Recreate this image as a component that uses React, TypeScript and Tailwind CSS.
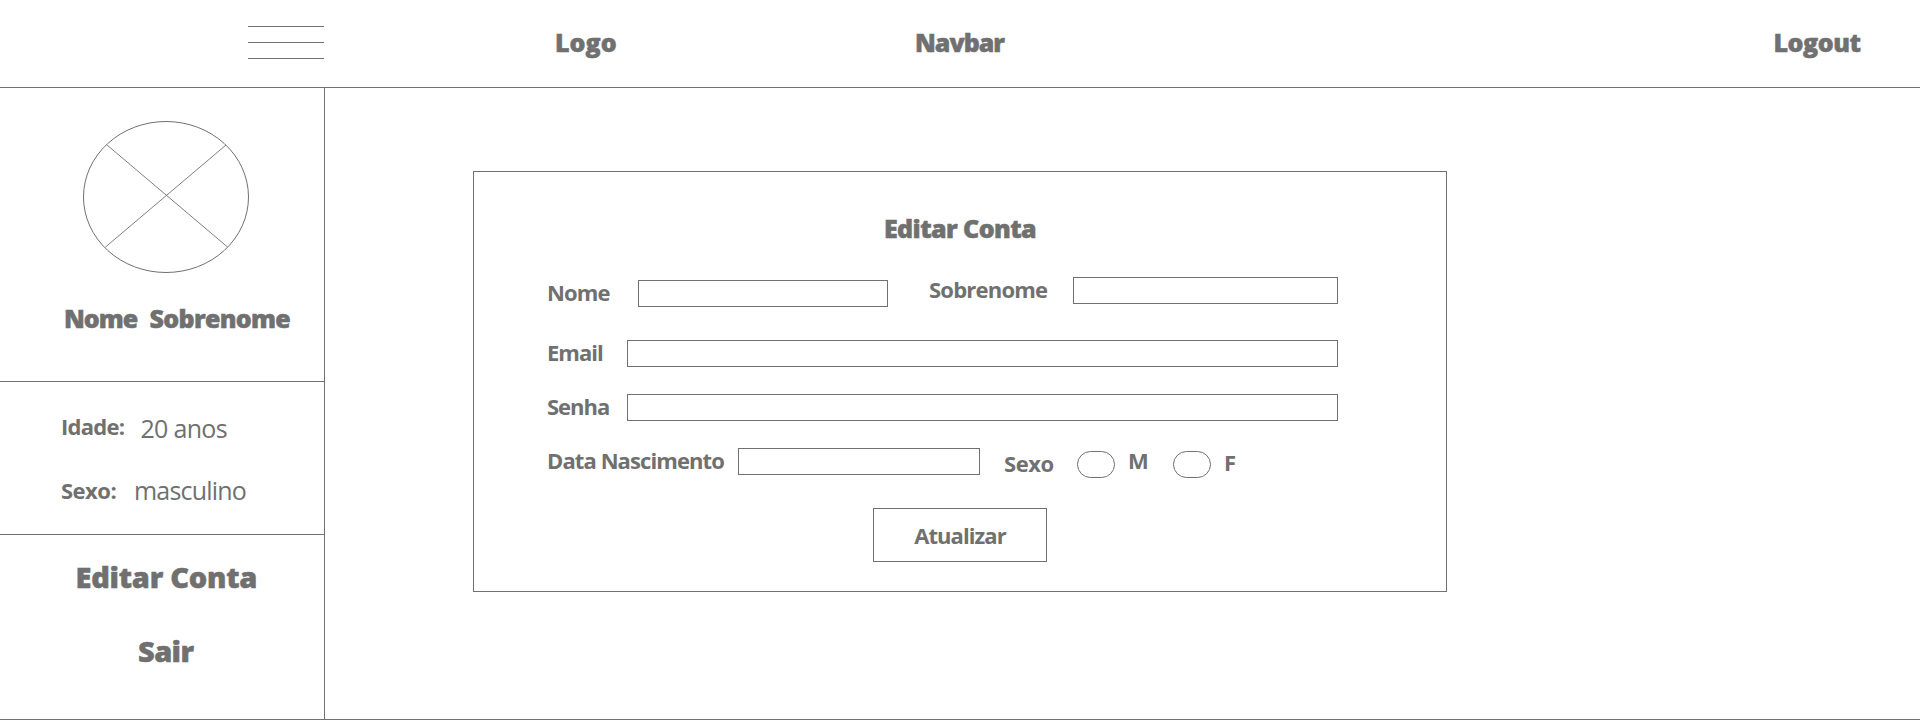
import type { ReactNode } from "react";

function Heading({ className, children }: { className: string; children: ReactNode }) {
  return (
    <span
      className={`block shrink-0 whitespace-nowrap text-[25px] leading-8 font-extrabold [-webkit-text-stroke:0.5px_#707070] ${className}`}
    >
      {children}
    </span>
  );
}

function Label({ className, children }: { className: string; children: ReactNode }) {
  return (
    <span className={`block shrink-0 whitespace-nowrap text-[22px] leading-7 font-bold ${className}`}>
      {children}
    </span>
  );
}

function Value({ className, children }: { className: string; children: ReactNode }) {
  return (
    <span className={`block whitespace-nowrap text-[25px] leading-8 font-normal ${className}`}>{children}</span>
  );
}

function Field({ className }: { className: string }) {
  return <input className={`block h-[27px] shrink-0 border border-[#707070] bg-white outline-none ${className}`} />;
}

function Header() {
  return (
    <header className="flex h-[88px] shrink-0 items-start border-b border-[#707070] pt-[26px]">
      <div className="ml-[248px] flex w-[76px] flex-col gap-[15px]">
        <div className="h-px bg-[#707070]" />
        <div className="h-px bg-[#707070]" />
        <div className="h-px bg-[#707070]" />
      </div>
      <Heading className="ml-[231px] w-[360px]">Logo</Heading>
      <Heading className="w-[858.5px] tracking-[-1px]">Navbar</Heading>
      <Heading className="tracking-[-0.45px]">Logout</Heading>
    </header>
  );
}

function Sidebar() {
  return (
    <aside className="flex w-[325px] shrink-0 flex-col border-r border-[#707070]">
      <section className="h-[294px] border-b border-[#707070] pt-[33px]">
        <svg className="ml-[83px] block" width="166" height="152" viewBox="0 0 166 152" fill="none" stroke="#707070">
          <ellipse cx="83" cy="76" rx="82.5" ry="75.5" />
          <path d="M24 24 L144.5 126 M143 24 L22.5 126" strokeWidth="0.9" />
        </svg>
        <div className="mt-[29px] flex pl-[64px]">
          <Heading className="w-[85.5px] tracking-[-1px]">Nome</Heading>
          <Heading className="tracking-[-0.68px]">Sobrenome</Heading>
        </div>
      </section>
      <section className="h-[153px] border-b border-[#707070] pt-[30px] pl-[61px]">
        <div className="flex items-start">
          <Label className="w-[79.5px] tracking-[-0.75px]">Idade:</Label>
          <Value className="tracking-[-0.7px]">20 anos</Value>
        </div>
        <div className="mt-[30px] flex items-start">
          <Label className="mt-[2px] w-[73px] tracking-[-0.5px]">Sexo:</Label>
          <Value className="tracking-[-0.8px]">masculino</Value>
        </div>
      </section>
      <nav className="flex flex-col items-start pt-[24px] text-[29px] leading-9 font-extrabold [-webkit-text-stroke:0.5px_#707070]">
        <a className="ml-[75.5px] tracking-[-0.25px]">Editar Conta</a>
        <a className="mt-[38px] ml-[138px] tracking-[-0.6px]">Sair</a>
      </nav>
    </aside>
  );
}

function AccountForm() {
  return (
    <form className="mt-[83px] ml-[148px] h-[421px] w-[974px] border border-[#707070] pt-[40px] pl-[73px]">
      <Heading className="ml-[337px] tracking-[-0.6px]">Editar Conta</Heading>
      <div className="mt-[31px] flex items-start">
        <Label className="mt-[3px] w-[91px] tracking-[-0.9px]">Nome</Label>
        <Field className="mt-[5px] w-[250px]" />
        <Label className="ml-[41px] w-[144px] tracking-[-0.78px]">Sobrenome</Label>
        <Field className="mt-[2px] w-[265px]" />
      </div>
      <div className="mt-[31px] flex items-start">
        <Label className="w-[80px] tracking-[-1px]">Email</Label>
        <Field className="mt-[2px] w-[711px]" />
      </div>
      <div className="mt-[25px] flex items-start">
        <Label className="w-[80px] tracking-[-1px]">Senha</Label>
        <Field className="mt-[2px] w-[711px]" />
      </div>
      <div className="mt-[25px] flex h-8 items-start">
        <Label className="w-[191px] tracking-[-0.9px]">Data Nascimento</Label>
        <Field className="mt-[2px] w-[242px]" />
        <Label className="mt-[3px] ml-[24px] w-[73px] tracking-[-0.45px]">Sexo</Label>
        <Field className="mt-[5px] w-[38px] rounded-full" />
        <Label className="ml-[13px] w-[45px]">M</Label>
        <Field className="mt-[5px] w-[38px] rounded-full" />
        <Label className="mt-[2px] ml-[13px]">F</Label>
      </div>
      <button
        type="button"
        className="mt-[30px] ml-[326px] flex h-[54px] w-[174px] items-center justify-center border border-[#707070]"
      >
        <Label className="tracking-[-0.93px]">Atualizar</Label>
      </button>
    </form>
  );
}

export default function App() {
  return (
    <div className="flex h-[720px] w-[1920px] flex-col overflow-hidden border-b border-[#707070] bg-white font-['Open_Sans','Noto_Sans',sans-serif] text-[#707070]">
      <Header />
      <div className="flex grow">
        <Sidebar />
        <main>
          <AccountForm />
        </main>
      </div>
    </div>
  );
}
